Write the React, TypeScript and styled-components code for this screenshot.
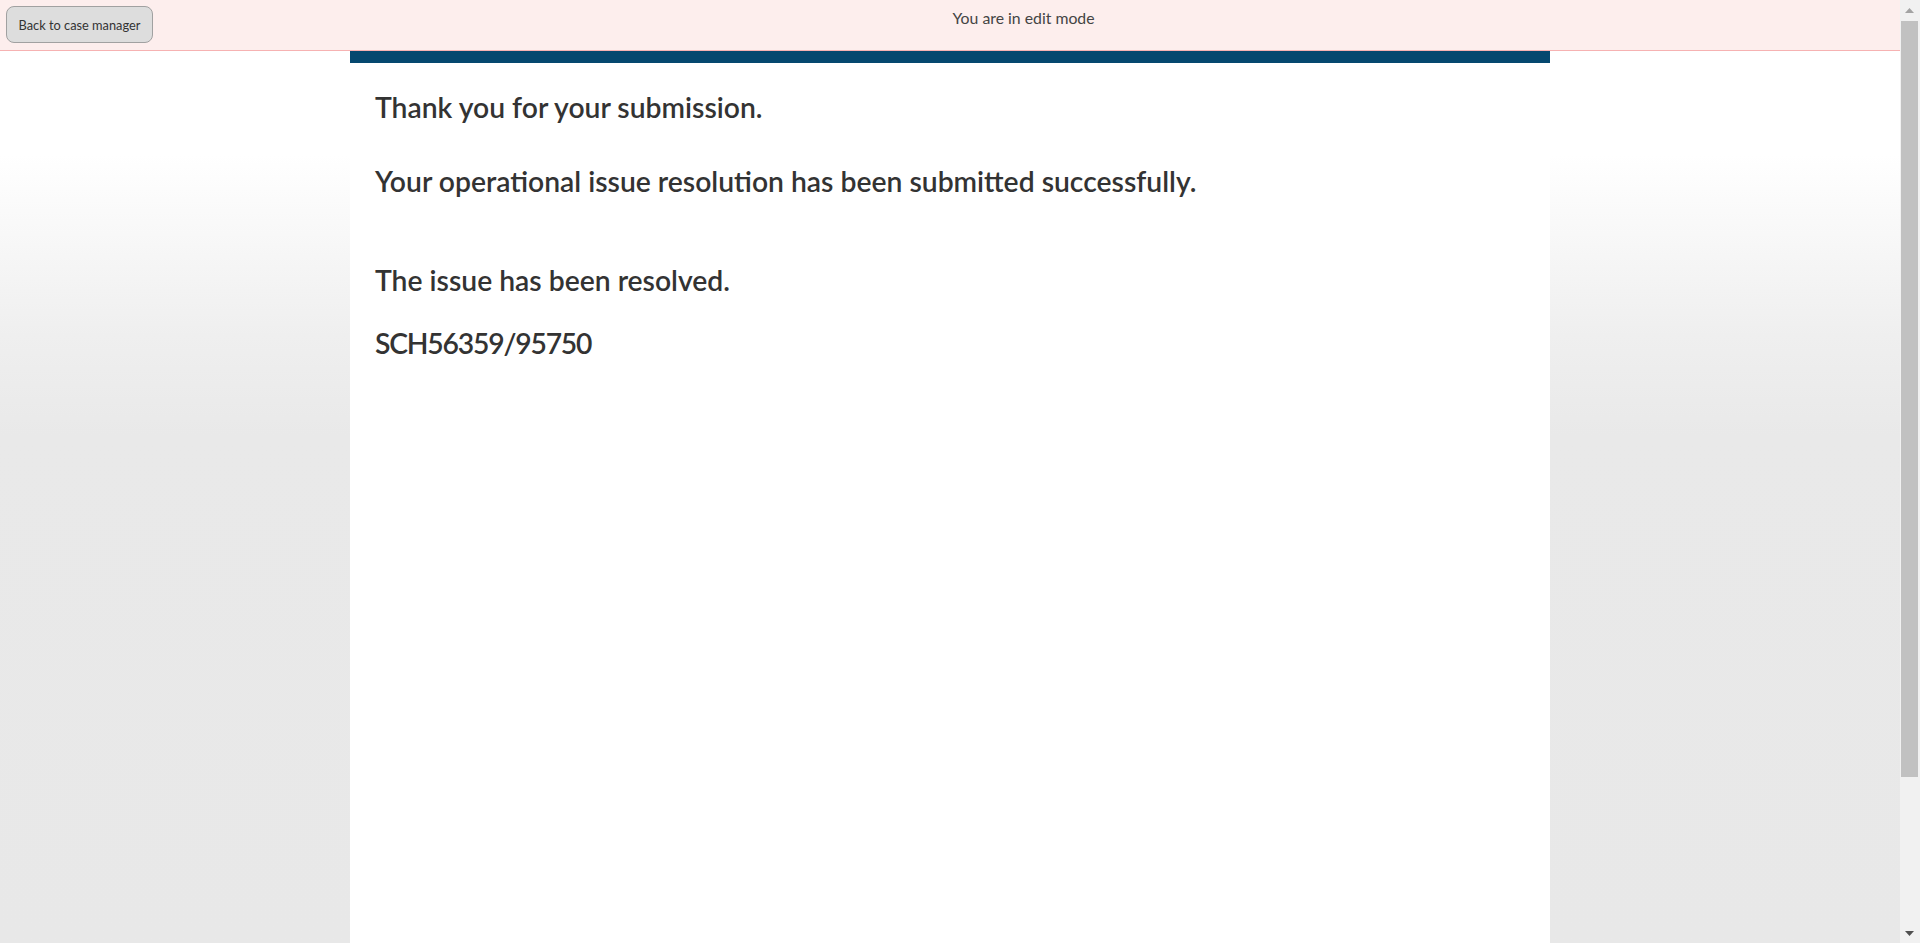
import React from "react";
import styled, { createGlobalStyle } from "styled-components";

const GlobalStyle = createGlobalStyle`
  html, body {
    margin: 0;
    padding: 0;
    height: 100%;
    overflow: hidden;
  }
  body {
    font-family: "Lato", "Open Sans", sans-serif;
    color: #333333;
  }
`;

const Shell = styled.div`
  display: flex;
  height: 100vh;
  overflow: hidden;
`;

const Viewport = styled.div`
  flex: 1;
  min-width: 0;
  overflow: hidden;
  background-color: #e8e8e8;
  background-image: linear-gradient(
    to bottom,
    #ffffff 0px,
    #ffffff 155px,
    #f7f7f7 245px,
    #efefef 335px,
    #e9e9e9 435px,
    #e8e8e8 100%
  );
`;

const Page = styled.div`
  display: flex;
  flex-direction: column;
  min-height: 1127px;
`;

const EditBar = styled.header`
  display: flex;
  align-items: flex-start;
  height: 44px;
  padding: 6px 6px 0;
  background: #fdeeed;
  border-bottom: 1px solid #f6b2b2;
`;

const BackButton = styled.button`
  width: 147px;
  height: 37px;
  padding: 0;
  border: 1px solid #a1a1a1;
  border-radius: 8px;
  background: #dddddd;
  color: #333333;
  font-family: "Lato", "Open Sans", sans-serif;
  font-size: 12.8px;
  cursor: pointer;
`;

const ModeNotice = styled.div`
  flex: 1;
  text-align: center;
  padding-top: 3px;
  font-size: 15.8px;
  line-height: 18px;
  color: #444444;
`;

const Card = styled.main`
  flex: 1;
  width: 1200px;
  margin: 0 auto;
  box-sizing: border-box;
  background: #ffffff;
  border-top: 12px solid #05486f;
  padding: 27px 25px;
`;

const Message = styled.p<{ $gap: number; $tight?: boolean }>`
  margin: ${(p) => p.$gap}px 0 0;
  font-size: 28.3px;
  font-weight: 600;
  line-height: 34px;
  letter-spacing: ${(p) => (p.$tight ? "-1.2px" : "normal")};
  color: #333333;
`;

const ScrollRail = styled.div`
  width: 20px;
  flex: none;
  display: flex;
  flex-direction: column;
  background: #f1f1f1;
`;

const ScrollButton = styled.div`
  height: 20px;
  flex: none;
  display: flex;
  align-items: center;
  justify-content: center;
  padding-right: 1px;
`;

const ScrollTrack = styled.div`
  flex: 1;
  padding: 1px 2px 0 1px;
`;

const ScrollThumb = styled.div`
  height: 756px;
  background: #c1c1c1;
`;

function Arrow({ down }: { down?: boolean }) {
  return (
    <svg width="9" height="5" viewBox="0 0 9 5">
      {down ? (
        <polygon points="0,0 9,0 4.5,5" fill="#505050" />
      ) : (
        <polygon points="4.5,0 9,5 0,5" fill="#a3a3a3" />
      )}
    </svg>
  );
}

export default function App() {
  return (
    <>
      <GlobalStyle />
      <Shell>
        <Viewport>
          <Page>
            <EditBar>
              <BackButton type="button">Back to case manager</BackButton>
              <ModeNotice>You are in edit mode</ModeNotice>
            </EditBar>
            <Card>
              <Message $gap={0}>Thank you for your submission.</Message>
              <Message $gap={40}>Your operational issue resolution has been submitted successfully.</Message>
              <Message $gap={65}>The issue has been resolved.</Message>
              <Message $gap={29} $tight>
                SCH56359/95750
              </Message>
            </Card>
          </Page>
        </Viewport>
        <ScrollRail aria-hidden="true">
          <ScrollButton>
            <Arrow />
          </ScrollButton>
          <ScrollTrack>
            <ScrollThumb />
          </ScrollTrack>
          <ScrollButton>
            <Arrow down />
          </ScrollButton>
        </ScrollRail>
      </Shell>
    </>
  );
}
